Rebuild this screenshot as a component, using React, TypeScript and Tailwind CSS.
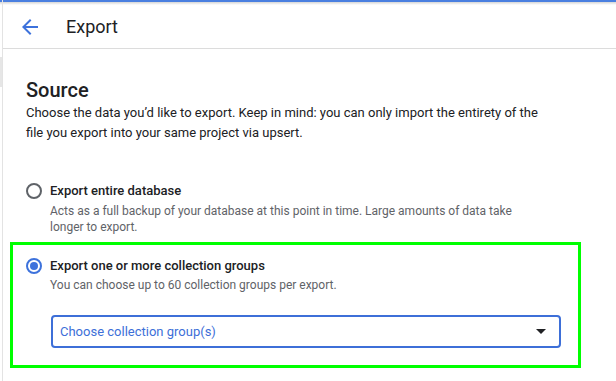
import React from "react";

export default function App() {
  return (
    <div className="relative w-[616px] h-[381px] bg-white overflow-hidden font-['Roboto',_sans-serif] text-[#202124]">
      <div className="h-[2px] bg-[#4a7fe0]" />
      <div className="h-[3px] bg-gradient-to-b from-[#d6d6d6] to-white" />
      <div className="ml-[2px] border-l border-[#e3e3e3] h-full">
        <header className="h-[43px] flex items-center border-b border-[#dcdcdc] -mt-[5px] pt-[5px] box-content">
          <svg width="24" height="24" viewBox="0 0 24 24" className="ml-[15px]" fill="#3d72dc">
            <path d="M20 11H7.83l5.59-5.59L12 4l-8 8 8 8 1.41-1.41L7.83 13H20v-2z" />
          </svg>
          <span className="ml-[24px] text-[18px] leading-[24px] text-[#202124]">Export</span>
        </header>
        <main className="pl-[23px] pt-[29px]">
          <h1 className="text-[20px] leading-[24px] font-medium text-[#202124]">Source</h1>
          <p className="w-[532px] text-[13px] leading-[20px] text-[#202124] mt-[1px]">
            Choose the data you’d like to export. Keep in mind: you can only import the entirety of the file you export into your same project via upsert.
          </p>

          <div className="mt-[38px] flex">
            <div className="w-[16px] h-[16px] mt-[2px] rounded-full border-2 border-[#5f6368]" />
            <div className="ml-[8px]">
              <div className="text-[13px] leading-[20px] font-medium text-[#202124]">Export entire database</div>
              <div className="w-[470px] mt-[2px] text-[12px] leading-[16px] text-[#5f6368]">
                Acts as a full backup of your database at this point in time. Large amounts of data take longer to export.
              </div>
            </div>
          </div>

          <div className="mt-[21px] flex">
            <div className="w-[16px] h-[16px] mt-[2px] rounded-full border-2 border-[#3d72dc] flex items-center justify-center">
              <div className="w-[8px] h-[8px] rounded-full bg-[#3d72dc]" />
            </div>
            <div className="ml-[8px]">
              <div className="text-[13px] leading-[20px] font-medium text-[#202124]">Export one or more collection groups</div>
              <div className="text-[12px] leading-[16px] text-[#5f6368] mt-[1px]">
                You can choose up to 60 collection groups per export.
              </div>
              <div className="mt-[22px] ml-[1px] w-[510px] h-[33px] border-2 border-[#3d6fd8] rounded-[4px] flex items-center justify-between pl-[7px] pr-[13px]">
                <span className="text-[13px] text-[#3d6fd8]">Choose collection group(s)</span>
                <svg width="10" height="5" viewBox="0 0 10 5" fill="#202124">
                  <path d="M0 0h10L5 5z" />
                </svg>
              </div>
            </div>
          </div>
        </main>
      </div>
      <div className="absolute left-0 top-[57px] w-[2px] h-[30px] bg-[#e6e6e6]" />
      <div className="absolute left-[10px] top-[242px] w-[571px] h-[126px] border-[3px] border-[#00ff00]" />
    </div>
  );
}
